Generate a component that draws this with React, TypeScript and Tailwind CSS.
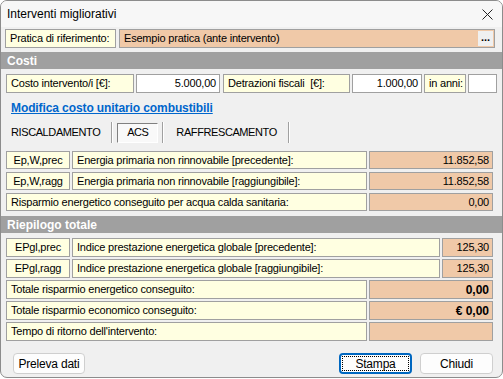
import React from 'react';

const base = "font-['Liberation_Sans',sans-serif] text-[11px] tracking-[-0.2px]";
const lbl = 'border border-[#a0a0a0] bg-[#ffffe1] flex items-center px-[4px] text-black whitespace-nowrap overflow-hidden';
const val = 'border border-[#a0a0a0] bg-[#f0c9a8] flex items-center justify-end px-[3px] text-black whitespace-nowrap';
const inp = 'border border-[#a0a0a0] bg-white flex items-center justify-end px-[3px] text-black whitespace-nowrap';

function Header({ title }: { title: string }) {
  return (
    <div className="h-[17px] bg-[#a0a0a0] flex items-center px-[6px]">
      <span className="text-white font-bold text-[12px] tracking-[0px]">{title}</span>
    </div>
  );
}

function CodeRow({ code, desc, value, codeW, descW, valW, h }: { code: string; desc: string; value: string; codeW: string; descW: string; valW: string; h: string }) {
  return (
    <div className={`flex ${h} gap-[2px]`}>
      <div className={`${lbl} ${codeW} justify-center`}>{code}</div>
      <div className={`${lbl} ${descW}`}>{desc}</div>
      <div className={`${val} ${valW}`}>{value}</div>
    </div>
  );
}

function SumRow({ label, value, bold, h }: { label: string; value: string; bold?: boolean; h: string }) {
  return (
    <div className={`flex ${h} gap-[2px]`}>
      <div className={`${lbl} w-[361px]`}>{label}</div>
      <div className={`${val} w-[124px] ${bold ? 'font-bold text-[12px] tracking-[0px]' : ''}`}>{value}</div>
    </div>
  );
}

function Sep() {
  return <div className="w-[2px] h-[21px] border-l border-[#a0a0a0] border-r border-r-white" />;
}

export default function App() {
  return (
    <div className={`w-[503px] h-[379px] bg-white ${base}`}>
      <div className="w-[503px] h-[378px] border border-[#8c8c8c] rounded-[7px] bg-[#f0f0f0] overflow-hidden flex flex-col">
        {/* title bar */}
        <div className="h-[26px] bg-[#f7f7f7] flex items-center justify-between pl-[6px] pr-[8px] shrink-0">
          <span className="text-[12px] tracking-[0px] text-black">Interventi migliorativi</span>
          <svg width="11" height="11" viewBox="0 0 11 11" className="mr-[1px]">
            <path d="M0.5 0.5 L10.5 10.5 M10.5 0.5 L0.5 10.5" stroke="#222" strokeWidth="1" />
          </svg>
        </div>

        {/* pratica */}
        <div className="flex h-[19px] gap-[3px] mt-[2px] pl-[4px]">
          <div className={`${lbl} w-[111px]`}>Pratica di riferimento:</div>
          <div className="border border-[#a0a0a0] bg-[#f0c9a8] w-[376px] flex items-center justify-between pl-[4px] pr-[1px] whitespace-nowrap">
            <span>Esempio pratica (ante intervento)</span>
            <div className="w-[15px] h-[15px] bg-[#f0f0f0] flex items-center justify-center font-bold text-[11px] tracking-[0px] leading-none pb-[3px]">...</div>
          </div>
        </div>

        <div className="mt-[4px]">
          <Header title="Costi" />
        </div>

        {/* costi row */}
        <div className="flex h-[19px] mt-[5px] pl-[5px]">
          <div className={`${lbl} w-[128px]`}>Costo intervento/i [€]:</div>
          <div className={`${inp} w-[84px] ml-[2px]`}>5.000,00</div>
          <div className={`${lbl} w-[127px] ml-[3px]`}>Detrazioni fiscali&nbsp; [€]:</div>
          <div className={`${inp} w-[70px] ml-[2px]`}>1.000,00</div>
          <div className={`${lbl} w-[42px] ml-[2px] px-[2px]`}>in anni:</div>
          <div className={`${inp} w-[29px] ml-[2px]`}></div>
        </div>

        <div className="mt-[7px] pl-[10px] h-[16px] flex items-center">
          <span className="text-[#0066cc] underline font-bold text-[12px] tracking-[-0.1px]">Modifica costo unitario combustibili</span>
        </div>

        {/* tabs */}
        <div className="flex items-center h-[23px] mt-[5px] pl-[10px] text-[11px] tracking-[-0.4px]">
          <span>RISCALDAMENTO</span>
          <div className="ml-[11px]"><Sep /></div>
          <div className="ml-[4px] w-[41px] h-[20px] border border-t-[#808080] border-l-[#808080] border-r-white border-b-white bg-[#f9f9f9] flex items-center justify-center">
            ACS
          </div>
          <div className="ml-[4px]"><Sep /></div>
          <span className="ml-[12px]">RAFFRESCAMENTO</span>
          <div className="ml-[11px]"><Sep /></div>
        </div>

        <div className="flex flex-col gap-[3px] mt-[7px] pl-[5px]">
          <CodeRow h="h-[18px]" code="Ep,W,prec" desc="Energia primaria non rinnovabile [precedente]:" value="11.852,58" codeW="w-[64px]" descW="w-[295px]" valW="w-[124px]" />
          <CodeRow h="h-[18px]" code="Ep,W,ragg" desc="Energia primaria non rinnovabile [raggiungibile]:" value="11.852,58" codeW="w-[64px]" descW="w-[295px]" valW="w-[124px]" />
          <SumRow h="h-[18px]" label="Risparmio energetico conseguito per acqua calda sanitaria:" value="0,00" />
        </div>

        <div className="mt-[5px]">
          <Header title="Riepilogo totale" />
        </div>

        <div className="flex flex-col gap-[2px] mt-[5px] pl-[5px]">
          <CodeRow h="h-[19px]" code="EPgl,prec" desc="Indice prestazione energetica globale [precedente]:" value="125,30" codeW="w-[64px]" descW="w-[368px]" valW="w-[51px]" />
          <CodeRow h="h-[19px]" code="EPgl,ragg" desc="Indice prestazione energetica globale [raggiungibile]:" value="125,30" codeW="w-[64px]" descW="w-[368px]" valW="w-[51px]" />
          <SumRow h="h-[19px]" label="Totale risparmio energetico conseguito:" value="0,00" bold />
          <SumRow h="h-[19px]" label="Totale risparmio economico conseguito:" value="€ 0,00" bold />
          <SumRow h="h-[19px]" label="Tempo di ritorno dell'intervento:" value="" />
        </div>

        {/* buttons */}
        <div className="flex items-center mt-[12px] pl-[12px] pr-[9px] text-[12px] tracking-[-0.2px]">
          <button className="w-[72px] h-[21px] rounded-[4px] border border-[#cfcfcf] bg-[#fdfdfd]">Preleva dati</button>
          <div className="flex-1" />
          <button className="w-[73px] h-[21px] rounded-[4px] border-2 border-[#0067c0] bg-[#fdfdfd] p-[1px]">
            <div className="w-full h-full border border-dotted border-black flex items-center justify-center">Stampa</div>
          </button>
          <button className="w-[73px] h-[21px] rounded-[4px] border border-[#cfcfcf] bg-[#fdfdfd] ml-[8px]">Chiudi</button>
        </div>
      </div>
    </div>
  );
}
